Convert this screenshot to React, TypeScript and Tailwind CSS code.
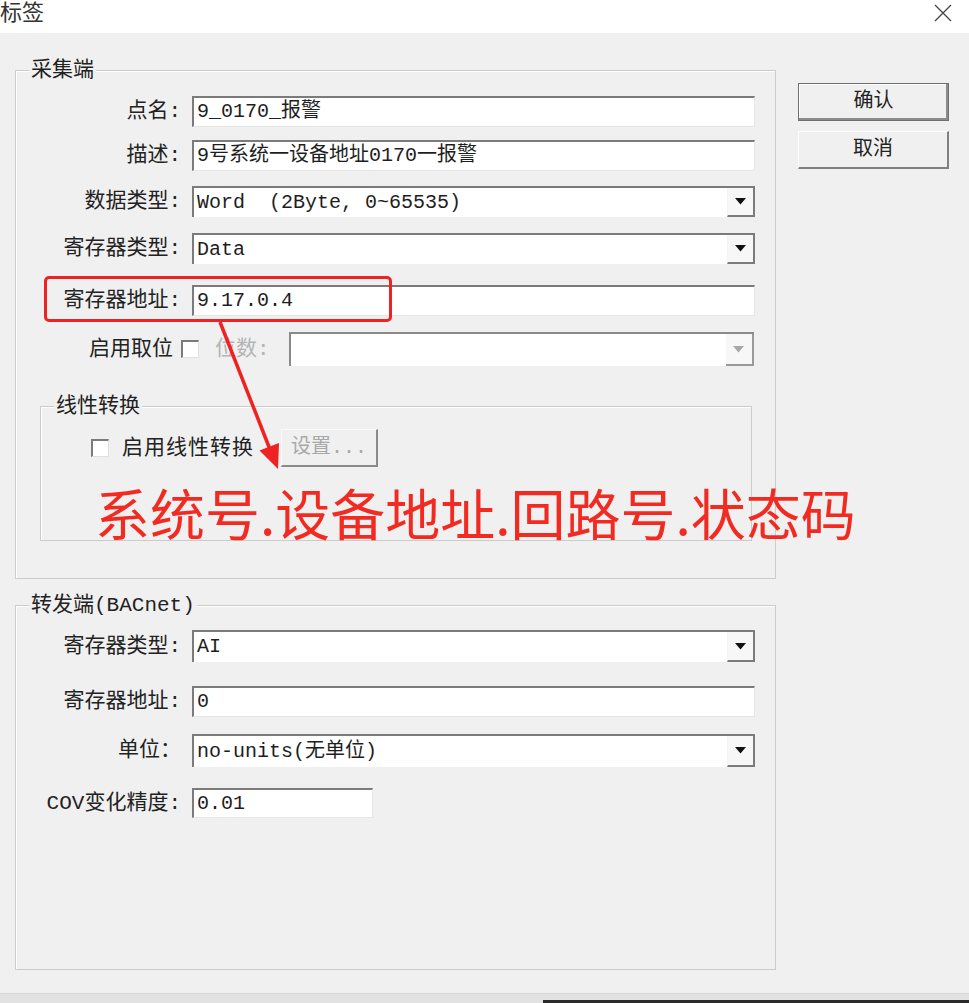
import React from "react";

const inputBorder =
  "border-t-2 border-l-2 border-b border-r border-t-[#7b7b7b] border-l-[#7b7b7b] border-b-[#e6e6e6] border-r-[#e6e6e6] bg-white";

function TextBox({ value, className = "" }: { value: string; className?: string }) {
  return (
    <div className={`${inputBorder} h-full flex items-center pl-[3px] text-[20px] leading-none text-[#1e1e1e] whitespace-pre ${className}`}>
      {value}
    </div>
  );
}

function Combo({ value, disabled = false }: { value: string; disabled?: boolean }) {
  return (
    <div className="border-t-2 border-l-2 border-t-[#7b7b7b] border-l-[#7b7b7b] bg-white h-full w-[563px] flex">
      <div className="flex-1 flex items-center pl-[3px] text-[20px] leading-none text-[#1e1e1e] whitespace-pre">{value}</div>
      <div className="w-[28px] h-full border-r-2 border-b-2 border-r-[#7b7b7b] border-b-[#7b7b7b] border-l border-l-[#f4f4f4] bg-[#f7f7f7] flex items-center justify-center">
        <svg width="11" height="7" viewBox="0 0 11 7">
          <polygon points="0,0 11,0 5.5,6.5" fill={disabled ? "#a8a8a8" : "#111"} />
        </svg>
      </div>
    </div>
  );
}

function CheckBox() {
  return (
    <div className="w-[18px] h-[18px] border-t-2 border-l-2 border-t-[#7b7b7b] border-l-[#7b7b7b] border-b border-r border-b-[#e0e0e0] border-r-[#e0e0e0] bg-white" />
  );
}

function Row({ label, h, mt, children }: { label: string; h: string; mt: string; children: React.ReactNode }) {
  return (
    <div className={`flex items-center ${h} ${mt}`}>
      <div className="w-[165px] text-right text-[21px] leading-none text-[#222] whitespace-nowrap">{label}</div>
      <div className="ml-[11px] h-full flex">{children}</div>
    </div>
  );
}

function Legend({ text }: { text: string }) {
  return (
    <div className="-mt-[11px] ml-[13px] px-[2px] bg-[#f0f0f0] w-fit h-[22px] text-[21px] leading-[22px] text-[#222] whitespace-nowrap">
      {text}
    </div>
  );
}

export default function App() {
  return (
    <div className="relative w-[969px] h-[1003px] overflow-hidden bg-[#f0f0f0] font-['Liberation_Mono','Noto_Sans_CJK_SC',monospace]">
      {/* Title bar */}
      <div className="h-[33px] bg-white flex items-start justify-between overflow-hidden">
        <div className="-mt-[2px] text-[22px] leading-[24px] text-[#333] font-['Noto_Sans_CJK_SC',sans-serif]">标签</div>
        <svg className="mt-[4px] mr-[17px]" width="18" height="18" viewBox="0 0 18 18">
          <path d="M1 1 L17 17 M17 1 L1 17" stroke="#444" strokeWidth="1.3" />
        </svg>
      </div>

      {/* Body */}
      <div className="flex h-[960px]">
        <div className="pl-[15px] pt-[37px]">
          {/* 采集端 */}
          <div className="w-[761px] h-[509px] border border-[#cbcbcb] shadow-[inset_1px_1px_0_#fff]">
            <Legend text="采集端" />
            <Row label="点名:" h="h-[31px]" mt="mt-[14px]">
              <TextBox value="9_0170_报警" className="w-[563px]" />
            </Row>
            <Row label="描述:" h="h-[31px]" mt="mt-[13px]">
              <TextBox value="9号系统一设备地址0170一报警" className="w-[563px]" />
            </Row>
            <Row label="数据类型:" h="h-[31px]" mt="mt-[15px]">
              <Combo value="Word  (2Byte, 0~65535)" />
            </Row>
            <Row label="寄存器类型:" h="h-[31px]" mt="mt-[16px]">
              <Combo value="Data" />
            </Row>
            <Row label="寄存器地址:" h="h-[31px]" mt="mt-[21px]">
              <TextBox value="9.17.0.4" className="w-[563px]" />
            </Row>
            <div className="flex items-center h-[34px] mt-[16px]">
              <div className="w-[157px] text-right text-[21px] leading-none text-[#222] whitespace-nowrap">启用取位</div>
              <div className="ml-[8px]"><CheckBox /></div>
              <div className="ml-[16px] text-[21px] leading-none text-[#b4b4b4] whitespace-nowrap">位数:</div>
              <div className="ml-[19px] h-full w-[465px] flex">
                <div className="border-t-2 border-l-2 border-t-[#8a8a8a] border-l-[#8a8a8a] bg-white h-full w-full flex">
                  <div className="flex-1" />
                  <div className="w-[28px] h-full border-r-2 border-b-2 border-r-[#9a9a9a] border-b-[#9a9a9a] bg-[#f7f7f7] flex items-center justify-center">
                    <svg width="11" height="7" viewBox="0 0 11 7">
                      <polygon points="0,0 11,0 5.5,6.5" fill="#a8a8a8" />
                    </svg>
                  </div>
                </div>
              </div>
            </div>

            {/* 线性转换 */}
            <div className="ml-[24px] mt-[40px] w-[712px] h-[135px] border border-[#cbcbcb] shadow-[inset_1px_1px_0_#fff]">
              <Legend text="线性转换" />
              <div className="flex items-center h-[38px] mt-[11px] pl-[50px]">
                <CheckBox />
                <div className="ml-[13px] text-[21px] leading-none text-[#222] whitespace-nowrap tracking-[1px]">启用线性转换</div>
                <div className="ml-[27px] w-[97px] h-full border-t border-l border-t-[#fafafa] border-l-[#fafafa] border-r-2 border-b-2 border-r-[#8a8a8a] border-b-[#8a8a8a] bg-[#f0f0f0] flex items-center justify-center text-[20px] leading-none text-[#a8a8a8] whitespace-nowrap">
                  设置...
                </div>
              </div>
            </div>
          </div>

          {/* 转发端 */}
          <div className="mt-[26px] w-[761px] h-[365px] border border-[#cbcbcb] shadow-[inset_1px_1px_0_#fff]">
            <Legend text="转发端(BACnet)" />
            <Row label="寄存器类型:" h="h-[32px]" mt="mt-[13px]">
              <Combo value="AI" />
            </Row>
            <Row label="寄存器地址:" h="h-[31px]" mt="mt-[24px]">
              <TextBox value="0" className="w-[563px]" />
            </Row>
            <Row label="单位：" h="h-[33px]" mt="mt-[17px]">
              <Combo value="no-units(无单位)" />
            </Row>
            <Row label="COV变化精度:" h="h-[30px]" mt="mt-[21px]">
              <TextBox value="0.01" className="w-[181px]" />
            </Row>
          </div>
        </div>

        {/* Buttons */}
        <div className="ml-[22px] pt-[50px] flex flex-col">
          <div className="w-[151px] h-[38px] border border-[#6f6f6f] shadow-[inset_-2px_-2px_0_#8c8c8c,inset_1px_1px_0_#fff] bg-[#f0f0f0] flex items-center justify-center text-[20px] leading-none text-[#222]">
            确认
          </div>
          <div className="mt-[10px] w-[151px] h-[38px] border-t border-l border-t-[#fdfdfd] border-l-[#fdfdfd] border-r-2 border-b-2 border-r-[#7f7f7f] border-b-[#7f7f7f] bg-[#f0f0f0] flex items-center justify-center text-[20px] leading-none text-[#222]">
            取消
          </div>
        </div>
      </div>

      {/* bottom strip */}
      <div className="flex h-[10px]">
        <div className="w-[543px] h-full bg-[#e2e2e2] border-t border-t-[#d6d6d6]" />
        <div className="flex-1 h-full bg-[#e2e2e2] border-t border-t-[#d6d6d6] border-b-[3px] border-b-[#2a2a2a]" />
      </div>

      {/* annotation overlays */}
      <div className="absolute left-[44px] top-[276px] w-[348px] h-[46px] border-[3px] border-[#ee2222] rounded-[5px]" />
      <svg className="absolute left-0 top-0 pointer-events-none" width="969" height="1003" viewBox="0 0 969 1003">
        <line x1="220" y1="322" x2="271" y2="452" stroke="#ee2222" strokeWidth="3.5" />
        <polygon points="278,469 259.5,450.5 279,443" fill="#ee2222" />
      </svg>
      <div className="absolute left-[95px] top-[484px] text-[55px] leading-none text-[#f22b22] whitespace-nowrap font-['Noto_Sans_CJK_SC',sans-serif]">
        系统号.设备地址.回路号.状态码
      </div>
    </div>
  );
}
